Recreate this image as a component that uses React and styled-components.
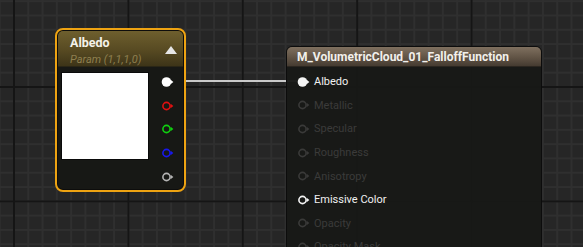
import React from 'react';
import styled, { createGlobalStyle } from 'styled-components';

const GlobalStyle = createGlobalStyle`
  html, body {
    margin: 0;
    padding: 0;
    background: #262626;
  }
  body {
    font-family: Roboto, 'Liberation Sans', sans-serif;
  }
`;

const Canvas = styled.div`
  position: relative;
  width: 583px;
  height: 247px;
  overflow: hidden;
  background-color: #262626;
  background-image:
    linear-gradient(to right, #151515 2px, transparent 2px),
    linear-gradient(to bottom, #151515 2px, transparent 2px),
    linear-gradient(to right, #2f2f2f 2px, transparent 2px),
    linear-gradient(to bottom, #2f2f2f 2px, transparent 2px);
  background-size: 114.4px 114.4px, 114.4px 114.4px, 14.3px 14.3px, 14.3px 14.3px;
  background-position: 13px 0, 0 86px, 13px 0, 0 86px;
`;

const Wire = styled.svg`
  position: absolute;
  left: 0;
  top: 0;
  width: 583px;
  height: 247px;
`;

const ParamNode = styled.div`
  position: absolute;
  left: 55px;
  top: 28px;
  width: 131px;
  height: 164px;
  box-sizing: border-box;
  border: 2px solid #eea312;
  border-radius: 8px;
  padding: 1px;
  background: #0d0d0c;
  display: flex;
  flex-direction: column;
`;

const ParamInner = styled.div`
  flex: 1;
  border-radius: 5px;
  overflow: hidden;
  background: #171815;
  display: flex;
  flex-direction: column;
`;

const ParamHeader = styled.div`
  height: 36px;
  box-sizing: border-box;
  padding: 2px 6px 0 12px;
  background: linear-gradient(to bottom, #6e5f2e 0%, #574a22 55%, #3d3418 100%);
  border-bottom: 1px solid #2a2616;
  display: flex;
  justify-content: space-between;
  align-items: center;
`;

const TitleBlock = styled.div`
  display: flex;
  flex-direction: column;
`;

const NodeTitle = styled.div`
  color: #f4f2ea;
  font-weight: 700;
  font-size: 12.5px;
  line-height: 19px;
`;

const NodeSub = styled.div`
  color: #8e7f4f;
  font-style: italic;
  font-size: 11px;
  line-height: 15px;
`;

const Collapse = styled.div`
  width: 0;
  height: 0;
  border-left: 6px solid transparent;
  border-right: 6px solid transparent;
  border-bottom: 8px solid #e6e6e6;
`;

const ParamBody = styled.div`
  flex: 1;
  display: flex;
  padding: 1px 8px 0 3px;
  gap: 12px;
`;

const Swatch = styled.div`
  width: 88px;
  height: 88px;
  margin-top: 4px;
  background: #ffffff;
  border: 1px solid #0a0a0a;
  box-sizing: border-box;
`;

const PinColumn = styled.div`
  display: flex;
  flex-direction: column;
  padding-top: 2px;
`;

const PinSlot = styled.div`
  height: 23.7px;
  display: flex;
  align-items: center;
`;

const MaterialNode = styled.div`
  position: absolute;
  left: 286px;
  top: 46px;
  width: 256px;
  height: 230px;
  box-sizing: border-box;
  border: 1px solid #0c0c0c;
  border-radius: 6px 6px 0 0;
  background: rgba(24, 25, 23, 0.97);
  overflow: hidden;
`;

const MaterialHeader = styled.div`
  height: 20px;
  box-sizing: border-box;
  padding: 0 10px;
  background: linear-gradient(to bottom, #7f705f 0%, #5e5143 60%, #453b31 100%);
  border-bottom: 1px solid #2b2620;
  color: #f2f0ec;
  font-weight: 700;
  font-size: 12px;
  display: flex;
  align-items: center;
`;

const InputList = styled.div`
  display: flex;
  flex-direction: column;
  padding: 3px 0 0 10px;
`;

const InputRow = styled.div`
  height: 23.6px;
  display: flex;
  align-items: center;
  gap: 3px;
  font-size: 11px;
  color: ${({ active }) => (active ? '#f0f0f0' : '#3b3b3a')};
`;

const Pin = ({ color, filled }) => (
  <svg width="14" height="12" viewBox="0 0 14 12">
    {filled ? (
      <circle cx="5.5" cy="6" r="4.8" fill={color} />
    ) : (
      <circle cx="5.5" cy="6" r="3.6" fill="none" stroke={color} strokeWidth="1.6" />
    )}
    <path d="M9.6 3.8 L12.4 6 L9.6 8.2 Z" fill={color} />
  </svg>
);

const inputs = [
  { name: 'Albedo', active: true, filled: true },
  { name: 'Metallic' },
  { name: 'Specular' },
  { name: 'Roughness' },
  { name: 'Anisotropy' },
  { name: 'Emissive Color', active: true },
  { name: 'Opacity' },
  { name: 'Opacity Mask' },
];

const outputs = [
  { color: '#ffffff', filled: true },
  { color: '#e01010' },
  { color: '#10d010' },
  { color: '#1818ee' },
  { color: '#b4b4b4' },
];

const App = () => (
  <>
    <GlobalStyle />
    <Canvas>
      <Wire viewBox="0 0 583 247">
        <line x1="176" y1="81" x2="298" y2="81" stroke="#c9c9c9" strokeWidth="2" />
      </Wire>

      <ParamNode>
        <ParamInner>
          <ParamHeader>
            <TitleBlock>
              <NodeTitle>Albedo</NodeTitle>
              <NodeSub>Param (1,1,1,0)</NodeSub>
            </TitleBlock>
            <Collapse />
          </ParamHeader>
          <ParamBody>
            <Swatch />
            <PinColumn>
              {outputs.map((p, i) => (
                <PinSlot key={i}>
                  <Pin color={p.color} filled={p.filled} />
                </PinSlot>
              ))}
            </PinColumn>
          </ParamBody>
        </ParamInner>
      </ParamNode>

      <MaterialNode>
        <MaterialHeader>M_VolumetricCloud_01_FalloffFunction</MaterialHeader>
        <InputList>
          {inputs.map((inp) => (
            <InputRow key={inp.name} active={inp.active}>
              <Pin color={inp.active ? '#f4f4f4' : '#3a3a39'} filled={inp.filled} />
              {inp.name}
            </InputRow>
          ))}
        </InputList>
      </MaterialNode>
    </Canvas>
  </>
);

export default App;
